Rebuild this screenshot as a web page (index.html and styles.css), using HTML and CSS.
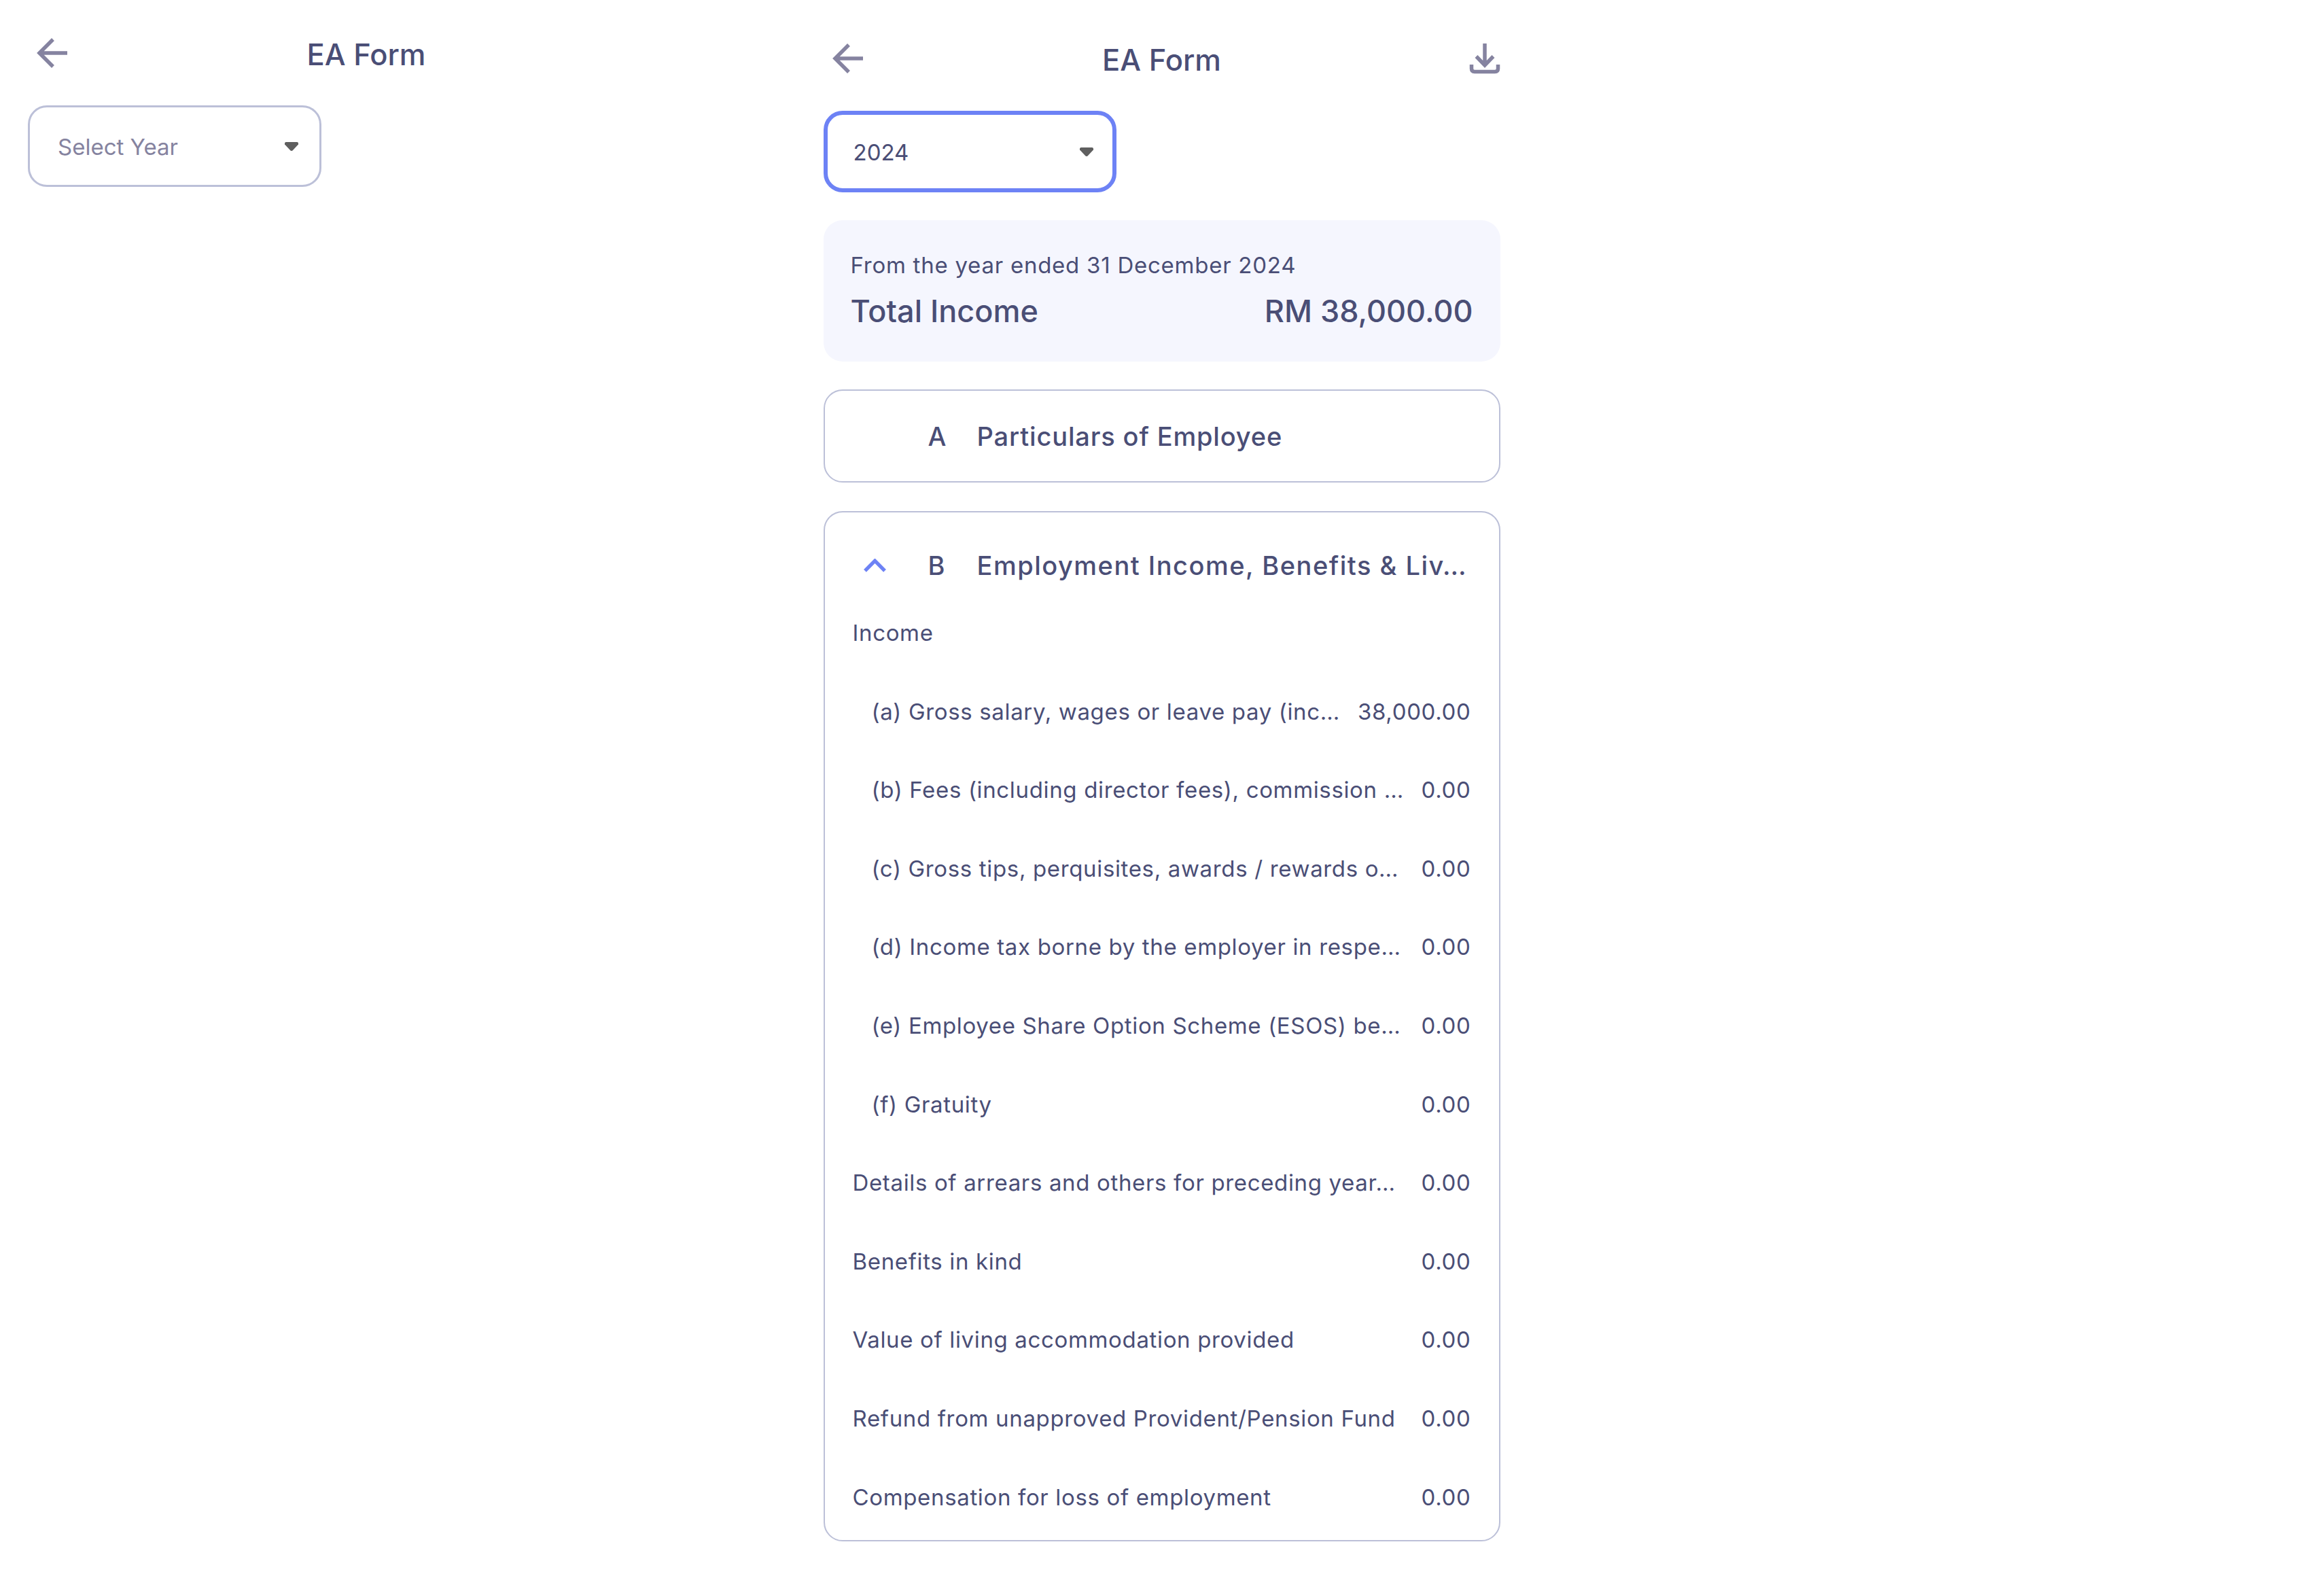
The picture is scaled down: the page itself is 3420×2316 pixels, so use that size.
FILE: index.html
```html
<!DOCTYPE html>
<html lang="en">
<head>
<meta charset="utf-8">
<title>EA Form</title>
<link rel="stylesheet" href="styles.css">
</head>
<body>
<main class="page">
  <section class="panel panel-empty">
    <header class="header">
      <span class="icon-slot"><svg class="icon icon-back" viewBox="0 0 44 44"><path d="M23 2 3 22l20 20M3 22h41"/></svg></span>
      <h1 class="title">EA Form</h1>
      <span class="icon-slot"></span>
    </header>
    <div class="select select-idle">
      <span class="placeholder">Select Year</span>
      <svg class="caret" viewBox="0 0 20 13"><path d="M2 0h16c1.500 0 2 1 2 2v1.500l-8.500 9c-.8.700-2.200.700-3 0L0 3.500V2C0 1 .5 0 2 0z"/></svg>
    </div>
  </section>

  <section class="panel panel-full">
    <header class="header">
      <span class="icon-slot"><svg class="icon icon-back" viewBox="0 0 44 44"><path d="M23 2 3 22l20 20M3 22h41"/></svg></span>
      <h1 class="title">EA Form</h1>
      <span class="icon-slot icon-slot-end"><svg class="icon icon-download" viewBox="0 0 44 44"><path d="M22 0v32M9.500 19 22 32l12.500-13M2.500 31v6c0 3 1.500 4.500 4.500 4.500h30c3 0 4.500-1.500 4.500-4.500v-6"/></svg></span>
    </header>
    <div class="select select-focus">
      <span class="value">2024</span>
      <svg class="caret" viewBox="0 0 20 13"><path d="M2 0h16c1.500 0 2 1 2 2v1.500l-8.500 9c-.8.700-2.200.700-3 0L0 3.500V2C0 1 .5 0 2 0z"/></svg>
    </div>
    <div class="summary">
      <p class="summary-note">From the year ended 31 December 2024</p>
      <div class="summary-total"><span>Total Income</span><span>RM 38,000.00</span></div>
    </div>
    <div class="card card-closed">
      <div class="card-head">
        <span class="chev-slot"></span>
        <span class="letter">A</span>
        <span class="card-title">Particulars of Employee</span>
      </div>
    </div>
    <div class="card card-open">
      <div class="card-head">
        <span class="chev-slot"><svg class="chevron" viewBox="0 0 34 20"><path d="M2 18 17 3l15 15"/></svg></span>
        <span class="letter">B</span>
        <span class="card-title">Employment Income, Benefits &amp; Liv…</span>
      </div>
      <div class="rows">
        <div class="row"><span class="label">Income</span></div>
        <div class="row sub"><span class="label">(a) Gross salary, wages or leave pay (inc…</span><span class="amount">38,000.00</span></div>
        <div class="row sub"><span class="label">(b) Fees (including director fees), commission …</span><span class="amount">0.00</span></div>
        <div class="row sub"><span class="label">(c) Gross tips, perquisites, awards / rewards o…</span><span class="amount">0.00</span></div>
        <div class="row sub"><span class="label">(d) Income tax borne by the employer in respe…</span><span class="amount">0.00</span></div>
        <div class="row sub"><span class="label">(e) Employee Share Option Scheme (ESOS) be…</span><span class="amount">0.00</span></div>
        <div class="row sub"><span class="label">(f) Gratuity</span><span class="amount">0.00</span></div>
        <div class="row"><span class="label">Details of arrears and others for preceding year…</span><span class="amount">0.00</span></div>
        <div class="row"><span class="label">Benefits in kind</span><span class="amount">0.00</span></div>
        <div class="row"><span class="label">Value of living accommodation provided</span><span class="amount">0.00</span></div>
        <div class="row"><span class="label">Refund from unapproved Provident/Pension Fund</span><span class="amount">0.00</span></div>
        <div class="row"><span class="label">Compensation for loss of employment</span><span class="amount">0.00</span></div>
      </div>
    </div>
  </section>
</main>
</body>
</html>
```
FILE: styles.css
```css
* { box-sizing: border-box; }
html, body { margin: 0; background: #fff; }
body { font-family: Inter, "Noto Sans", sans-serif; color: #4a4e76; }
.page { display: flex; align-items: flex-start; gap: 92.500px; width: 3420px; height: 2316px; overflow: hidden; }
.panel { width: 1078px; padding: 0 41px; flex: none; }
.panel-empty { padding-top: 56px; }
.panel-full { padding-top: 64px; }
.header { display: flex; align-items: center; justify-content: space-between; height: 44px; margin-bottom: 55px; }
.icon-slot { width: 90px; display: flex; padding-left: 14px; flex: none; }
.icon-slot-end { justify-content: flex-end; padding: 0 1px 0 0; }
.title { margin: 0; font-size: 43.500px; font-weight: 500; line-height: 52px; color: #4a4e76; transform: translateY(2px); }
.icon { width: 44px; height: 44px; flex: none; overflow: visible; }
.icon path { fill: none; stroke: #8583a0; stroke-width: 5.500; }
.select { height: 120px; display: flex; align-items: center; justify-content: space-between; background: #fff; }
.select-idle { width: 432px; border: 3px solid #bcc0d8; border-radius: 28px; padding: 1px 31px 0 41px; }
.select-focus { width: 431px; border: 6px solid #6d82f5; border-radius: 28px; padding: 1px 28px 0 38px; }
.placeholder { font-size: 33px; color: #85839f; }
.value { font-size: 33px; color: #4a4e76; }
.caret { width: 20px; height: 13px; fill: #5f5f5f; }
.summary { margin-top: 41px; height: 208px; padding: 46px 40px 0; background: #f5f6fe; border-radius: 28px; }
.summary-note { margin: 0; font-size: 33px; line-height: 40px; letter-spacing: .75px; }
.summary-total { display: flex; justify-content: space-between; margin-top: 20px; font-size: 45px; line-height: 56px; font-weight: 500; }
.card { border: 2px solid #bcc0d8; border-radius: 28px; margin-top: 41px; }
.card-closed { padding: 0 41px; height: 137px; }
.card-closed .card-head { height: 133px; margin-bottom: 0; }
.card-open { padding: 16px 41px 28px; margin-top: 42px; height: 1516px; }
.card-head { display: flex; align-items: center; height: 124px; margin-bottom: 2px; }
.chev-slot { width: 33px; margin-left: 16px; margin-right: 62px; flex: none; display: flex; }
.chevron { width: 33px; height: 20px; fill: none; stroke: #6d82f5; stroke-width: 5.500; }
.letter { width: 72px; flex: none; font-size: 38px; font-weight: 500; }
.card-title { font-size: 38px; font-weight: 500; white-space: nowrap; letter-spacing: .85px; }
.card-open .card-title { letter-spacing: 1.500px; }
.rows { display: flex; flex-direction: column; gap: 45.600px; }
.row { display: flex; justify-content: space-between; align-items: center; height: 70px; font-size: 33px; letter-spacing: .65px; }
.sub { padding-left: 28px; }
.label { white-space: nowrap; }
.amount { flex: none; }
```
